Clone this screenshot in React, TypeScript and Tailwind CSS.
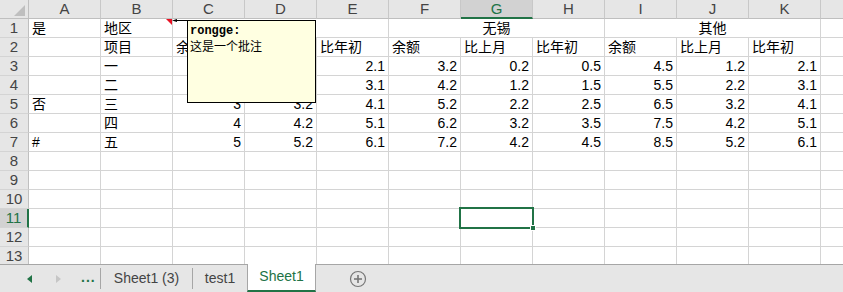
import { Fragment } from "react";

const COLS = ["A", "B", "C", "D", "E", "F", "G", "H", "I", "J", "K", "L"];

type Cell = string | number | null;

const ROW2: Cell[] = ["", "项目", "余额", "比上月", "比年初", "余额", "比上月", "比年初", "余额", "比上月", "比年初", ""];

const BODY: Cell[][] = [
  ["", "一", 1, 1.2, 2.1, 3.2, 0.2, 0.5, 4.5, 1.2, 2.1, ""],
  ["", "二", 2, 2.2, 3.1, 4.2, 1.2, 1.5, 5.5, 2.2, 3.1, ""],
  ["否", "三", 3, 3.2, 4.1, 5.2, 2.2, 2.5, 6.5, 3.2, 4.1, ""],
  ["", "四", 4, 4.2, 5.1, 6.2, 3.2, 3.5, 7.5, 4.2, 5.1, ""],
  ["#", "五", 5, 5.2, 6.1, 7.2, 4.2, 4.5, 8.5, 5.2, 6.1, ""],
];

const EMPTY: Cell[] = COLS.map(() => "");

const rows: Cell[][] = [ROW2, ...BODY, ...Array.from({ length: 6 }, () => EMPTY)];

const fmt = (v: number) => (Number.isInteger(v) ? String(v) : v.toFixed(1));

function GridCell({ value, span }: { value: Cell; span?: number }) {
  const isNum = typeof value === "number";
  return (
    <div
      className={`border-r border-b border-[#d4d4d4] bg-white px-[3px] leading-[18px] whitespace-nowrap overflow-hidden ${
        isNum ? "text-right" : "text-left"
      } ${span === 3 ? "col-span-3" : ""}`}
    >
      {isNum ? fmt(value) : value}
    </div>
  );
}

function RowHeader({ n, active }: { n: number; active?: boolean }) {
  return (
    <div
      className={`border-b border-[#d4d4d4] text-center text-[15px] leading-[18px] ${
        active
          ? "bg-[#d2d2d2] text-[#217346] border-r-2 border-r-[#217346]"
          : "bg-[#e6e6e6] text-[#444] border-r border-r-[#bfbfbf]"
      }`}
    >
      {n}
    </div>
  );
}

export default function App() {
  return (
    <div
      className="relative w-[843px] h-[292px] overflow-hidden bg-white text-[14px] text-black"
      style={{ fontFamily: '"Liberation Sans", "Noto Sans CJK SC", sans-serif' }}
    >
      {/* sheet grid */}
      <div className="h-[264px] overflow-hidden">
        <div className="grid w-[893px] grid-cols-[29px_repeat(12,72px)] grid-rows-[19px_repeat(13,19px)]">
          {/* corner */}
          <div className="relative bg-[#e6e6e6] border-r border-b border-[#bfbfbf]">
            <svg className="absolute left-[14px] top-[5px]" width="11" height="11" viewBox="0 0 11 11">
              <polygon points="11,0 11,11 0,11" fill="#bfbfbf" />
            </svg>
          </div>
          {COLS.map((c) => (
            <div
              key={c}
              className={`text-center text-[15px] leading-[18px] border-r border-[#c8c8c8] ${
                c === "G"
                  ? "bg-[#d2d2d2] text-[#217346] border-b-2 border-b-[#217346]"
                  : "bg-[#e6e6e6] text-[#444] border-b border-b-[#bfbfbf]"
              }`}
            >
              {c === "L" ? "" : c}
            </div>
          ))}

          {/* row 1 with merged headings */}
          <RowHeader n={1} />
          <GridCell value="是" />
          <GridCell value="地区" />
          <GridCell value="" span={3} />
          <div className="col-span-3 border-r border-b border-[#d4d4d4] text-center leading-[18px]">无锡</div>
          <div className="col-span-3 border-r border-b border-[#d4d4d4] text-center leading-[18px]">其他</div>
          <GridCell value="" />

          {rows.map((r, i) => (
            <Fragment key={i}>
              <RowHeader n={i + 2} active={i + 2 === 11} />
              {r.map((v, j) => (
                <GridCell key={j} value={v} />
              ))}
            </Fragment>
          ))}
        </div>
      </div>

      {/* comment indicator + connector */}
      <svg className="absolute left-[164px] top-[19px]" width="24" height="8" viewBox="0 0 24 8">
        <polygon points="2,0 8,0 8,6" fill="#e81123" />
        <polygon points="8,1.5 13,0 13,3" fill="#000" />
        <line x1="12" y1="1.5" x2="24" y2="1.5" stroke="#000" strokeWidth="1" />
      </svg>

      {/* comment box */}
      <div className="absolute left-[187px] top-[20px] w-[129px] h-[83px] border border-black bg-[#ffffe1] px-[2px] pt-[3px]">
        <div
          className="text-[12px] font-bold leading-[14px]"
          style={{ fontFamily: '"Liberation Mono", "Noto Sans CJK SC", monospace' }}
        >
          rongge:
        </div>
        <div
          className="text-[12px] leading-[16px]"
          style={{ fontFamily: '"Noto Sans CJK SC", sans-serif' }}
        >
          这是一个批注
        </div>
      </div>

      {/* active cell G11 */}
      <div className="absolute left-[459px] top-[207px] w-[75px] h-[22px] border-2 border-[#217346]" />
      <div className="absolute left-[530px] top-[225px] w-[6px] h-[6px] bg-[#217346] border border-white" />

      {/* sheet tabs */}
      <div className="absolute left-0 top-[264px] flex h-[28px] w-[843px] items-stretch border-t border-[#a6a6a6] bg-[#e6e6e6] text-[14px] text-[#444]">
        <div className="flex w-[100px] items-center">
          <svg className="ml-[27px]" width="5" height="8" viewBox="0 0 5 8">
            <polygon points="5,0 5,8 0,4" fill="#217346" />
          </svg>
          <svg className="ml-[24px]" width="5" height="8" viewBox="0 0 5 8">
            <polygon points="0,0 0,8 5,4" fill="#c6c6c6" />
          </svg>
          <span className="ml-[20px] pb-[2px] font-bold text-[#217346] tracking-[1px]">...</span>
        </div>
        <div className="my-[3px] w-px bg-[#a6a6a6]" />
        <div className="flex w-[91px] items-center justify-center pb-[1px]">Sheet1 (3)</div>
        <div className="my-[3px] w-px bg-[#a6a6a6]" />
        <div className="flex w-[54px] items-center justify-center pb-[1px]">test1</div>
        <div className="-mt-px flex w-[69px] items-center justify-center border-x border-[#a6a6a6] border-b-2 border-b-[#217346] bg-white pb-[1px] text-[#217346]">
          Sheet1
        </div>
        <div className="flex w-[84px] items-center justify-center">
          <svg width="18" height="18" viewBox="0 0 18 18">
            <circle cx="9" cy="9" r="7.5" fill="none" stroke="#777" strokeWidth="1.2" />
            <line x1="5" y1="9" x2="13" y2="9" stroke="#777" strokeWidth="1.6" />
            <line x1="9" y1="5" x2="9" y2="13" stroke="#777" strokeWidth="1.6" />
          </svg>
        </div>
      </div>
    </div>
  );
}
